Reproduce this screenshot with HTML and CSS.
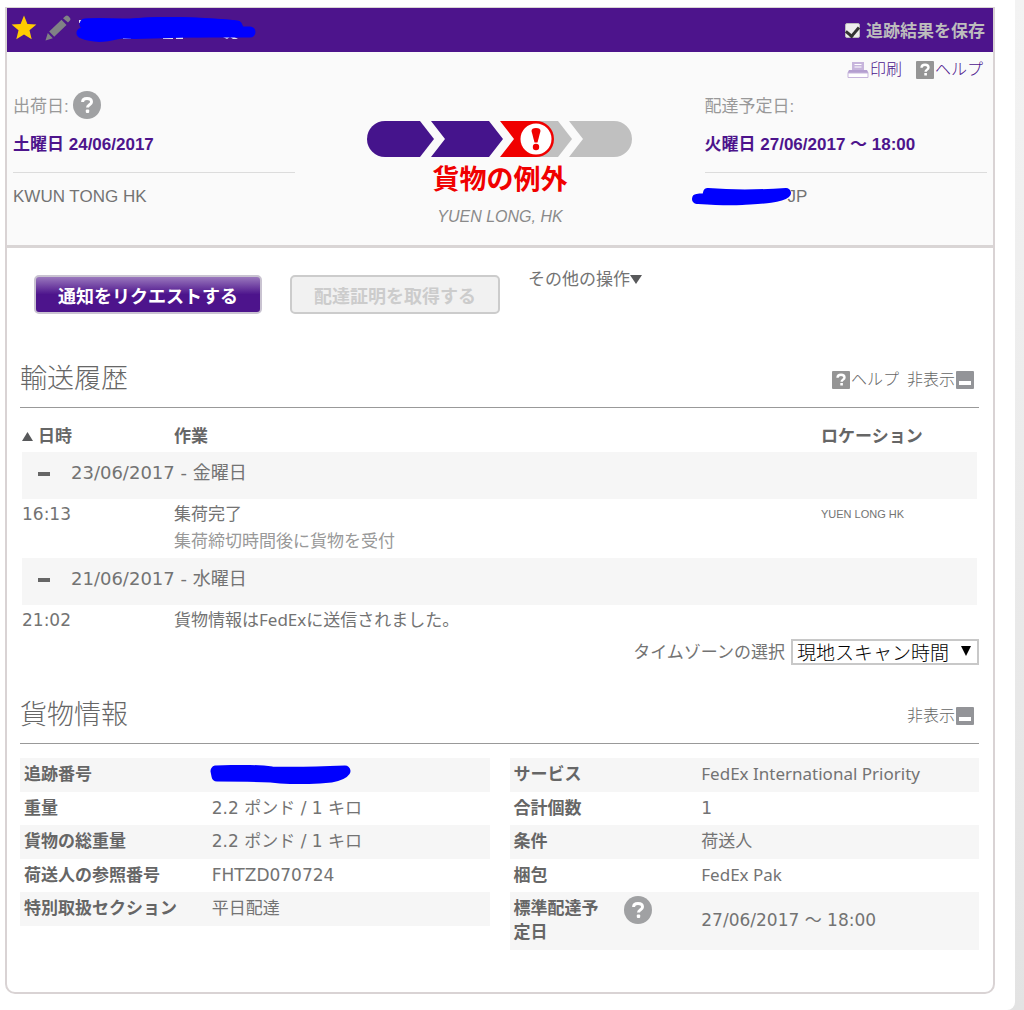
FILE: index.html
```html
<!DOCTYPE html>
<html lang="ja">
<head>
    <meta charset="UTF-8">
    <meta name="viewport" content="width=device-width, initial-scale=1.0">
    <title>貨物追跡</title>
    <link rel="stylesheet" href="styles.css">
</head>
<body>

<svg class="sprite" aria-hidden="true">
    <symbol id="icon-help-round" viewBox="0 0 28 28">
        <circle cx="14" cy="14" r="14" fill="#a0a1a3"/>
        <path d="M9.600 11C9.600 8.400 11.400 7.500 14 7.500c2.600 0 4.500 1.200 4.500 3.400 0 2.900-4 2.600-4 5.600" fill="none" stroke="#fff" stroke-width="3"/>
        <rect x="12.800" y="18.500" width="3.400" height="3.500" rx="1" fill="#fff"/>
    </symbol>
    <symbol id="icon-help" viewBox="0 0 18 18">
        <rect width="18" height="18" rx="1" fill="#959595"/>
        <path d="M5.500 6.700C5.600 4.600 7 3.800 9 3.800s3.500.9 3.500 2.700c0 2.200-2.900 2.100-2.900 4.300" fill="none" stroke="#fff" stroke-width="2.400"/>
        <rect x="8.300" y="12" width="2.600" height="2.500" fill="#fff"/>
    </symbol>
    <symbol id="icon-minus" viewBox="0 0 18 18">
        <rect width="18" height="18" rx="1" fill="#939498"/>
        <rect x="3" y="10" width="12" height="4" fill="#fff"/>
    </symbol>
</svg>

<div class="page">
    <main class="card">
        <header class="topbar">
            <button class="icon-button" aria-label="お気に入り">
                <svg width="26" height="26" viewBox="0 0 26 26"><path d="M13 0.500l3.400 8.400 9 .6-6.900 5.800 2.200 9-7.700-4.800-7.700 4.800 2.200-9L.6 9.500l9-.6z" fill="#ffcc00"/></svg>
            </button>
            <button class="icon-button" aria-label="編集">
                <svg width="26" height="26" viewBox="0 0 26 26" fill="#808285"><path d="M0.500 25.500l2.300-7.500 5 5.200z"/><path d="M4.200 16.500L16.500 4.700l5 5.200L9.200 21.700z"/><path d="M18 3.300l2.500-2.400c1-.8 2-.7 3 .4l1.300 1.500c.9 1 .9 2-.1 3L23 7.500z"/></svg>
            </button>
            <svg class="scribble-name" width="182" height="28" viewBox="0 0 182 28">
                <path d="M4 5h8v3H4zM34 6h5v2h-5zM48 22h8v2h-8zM74 20h5v3h-5zM88 21h10v3H88zM101 21h7v3h-7zM148 22l8-2 7 4-5 0-3-2-3 2z" fill="#e6e0ee"/>
                <path d="M10 9C24 8 36 9 56 9c28-3 60-2 106 2M7 18c14 6 28 3 42-1 26-3 60 0 84 0h42" fill="none" stroke="#0000fe" stroke-width="11" stroke-linecap="round"/>
                <path d="M6 8l40-2L56 4c30-4 80-1 102 1 9 2 11 6 10 10l-34 7-74 2L8 22z" fill="#0000fe"/>
            </svg>
            <label class="save"><input type="checkbox" checked>追跡結果を保存</label>
        </header>

        <section class="summary">
            <nav class="tools">
                <a href="#">
                    <svg width="22" height="18" viewBox="0 0 22 18"><path d="M5 1h12v9H5z" fill="#c7b5dc"/><path d="M7.500 3.500h7M7.500 6h7" stroke="#fff"/><path d="M2 9h18l1.500 3H.5z" fill="#b49fd0"/><path d="M1 12h20v4.500H1z" fill="#fff" stroke="#c7b5dc"/></svg>
                    印刷
                </a>
                <a href="#"><svg width="18" height="18"><use href="#icon-help"/></svg>ヘルプ</a>
            </nav>
            <div class="route">
                <div class="stop">
                    <div class="stop-label"><span>出荷日:</span><svg width="28" height="28"><use href="#icon-help-round"/></svg></div>
                    <div class="stop-date">土曜日 24/06/2017</div>
                    <div class="stop-place">KWUN TONG HK</div>
                </div>
                <div class="status">
                    <svg width="266" height="36" viewBox="0 0 266 36">
                        <path d="M18 0h35l14 18-14 18H18a18 18 0 0 1 0-36z" fill="#45148c"/>
                        <path d="M64 0h58l14 18-14 18H64l14-18z" fill="#45148c"/>
                        <path d="M160 0h31l14 18-14 18h-31z" fill="#c0c0c0"/>
                        <path d="M133 0h36a18 18 0 0 1 0 36h-36l14-18z" fill="#f00000"/>
                        <circle cx="169" cy="18" r="15.500" fill="#fff"/>
                        <path d="M164.500 10q0-3 4.500-3t4.500 3l-3 11.500h-3z" fill="#f00000"/>
                        <circle cx="169" cy="26" r="3.200" fill="#f00000"/>
                        <path d="M202 0h45a18 18 0 0 1 0 36h-45l14-18z" fill="#c0c0c0"/>
                    </svg>
                    <div class="status-text">貨物の例外</div>
                    <div class="status-place">YUEN LONG, HK</div>
                </div>
                <div class="stop">
                    <div class="stop-label"><span>配達予定日:</span></div>
                    <div class="stop-date">火曜日 27/06/2017 ～ 18:00</div>
                    <div class="stop-place">
                        <svg class="scribble-place" width="100" height="20" viewBox="0 0 100 20"><path d="M5 12c10-1 10-1 11-6 24 2 48 2 78 0-8 6-30 6-44 7-16 1-30 0-45-1z" fill="#0000fe" stroke="#0000fe" stroke-width="10" stroke-linejoin="round"/></svg>JP
                    </div>
                </div>
            </div>
        </section>

        <div class="actions">
            <button class="button button-primary">通知をリクエストする</button>
            <button class="button" disabled>配達証明を取得する</button>
            <a class="more" href="#">その他の操作<svg width="12" height="9"><path d="M0 0h12L6 9z" fill="#58595b"/></svg></a>
        </div>

        <section class="section">
            <div class="section-head">
                <h2>輸送履歴</h2>
                <div class="section-links">
                    <a href="#"><svg width="18" height="18"><use href="#icon-help"/></svg>ヘルプ</a>
                    <a href="#">非表示<svg width="18" height="18"><use href="#icon-minus"/></svg></a>
                </div>
            </div>
            <div class="history">
                <table>
                    <thead>
                        <tr>
                            <th class="col-time"><svg width="11" height="9"><path d="M0 9L5.500 0 11 9z" fill="#58595b"/></svg>日時</th>
                            <th>作業</th>
                            <th class="col-place">ロケーション</th>
                        </tr>
                    </thead>
                    <tbody>
                        <tr class="day">
                            <td colspan="3"><button class="toggle" aria-label="閉じる"></button>23/06/2017 - 金曜日</td>
                        </tr>
                        <tr>
                            <td>16:13</td>
                            <td>集荷完了<div class="note">集荷締切時間後に貨物を受付</div></td>
                            <td class="place">YUEN LONG HK</td>
                        </tr>
                        <tr class="day">
                            <td colspan="3"><button class="toggle" aria-label="閉じる"></button>21/06/2017 - 水曜日</td>
                        </tr>
                        <tr>
                            <td>21:02</td>
                            <td class="text">貨物情報はFedExに送信されました。</td>
                            <td></td>
                        </tr>
                    </tbody>
                </table>
            </div>
            <div class="timezone">
                <label for="timezone">タイムゾーンの選択</label>
                <select id="timezone">
                    <option>現地スキャン時間</option>
                </select>
            </div>
        </section>

        <section class="section">
            <div class="section-head">
                <h2>貨物情報</h2>
                <div class="section-links">
                    <a href="#">非表示<svg width="18" height="18"><use href="#icon-minus"/></svg></a>
                </div>
            </div>
            <div class="details">
                <table>
                    <tr>
                        <th>追跡番号</th>
                        <td><svg class="scribble-number" width="142" height="19" viewBox="0 0 142 19"><path d="M6 6c22-1 40-1 56 1 24 1 50 0 73-1-2 3-8 5-14 6-20 2-44 2-60 0-20-1-40-1-54-1z" fill="#0000fe" stroke="#0000fe" stroke-width="11" stroke-linejoin="round"/></svg></td>
                    </tr>
                    <tr><th>重量</th><td>2.2 ポンド / 1 キロ</td></tr>
                    <tr><th>貨物の総重量</th><td>2.2 ポンド / 1 キロ</td></tr>
                    <tr><th>荷送人の参照番号</th><td>FHTZD070724</td></tr>
                    <tr><th>特別取扱セクション</th><td>平日配達</td></tr>
                </table>
                <table>
                    <tr><th>サービス</th><td class="text">FedEx International Priority</td></tr>
                    <tr><th>合計個数</th><td>1</td></tr>
                    <tr><th>条件</th><td>荷送人</td></tr>
                    <tr><th>梱包</th><td class="text">FedEx Pak</td></tr>
                    <tr>
                        <th><div class="with-help"><span>標準配達予定日</span><svg width="28" height="28"><use href="#icon-help-round"/></svg></div></th>
                        <td>27/06/2017 ～ 18:00</td>
                    </tr>
                </table>
            </div>
        </section>
    </main>
</div>

</body>
</html>
```

FILE: styles.css
```css
* {
    box-sizing: border-box;
}
body {
    margin: 0;
    padding-right: 9px;
    background: linear-gradient(#f3f3f3, #e3e3e3);
    color: #737373;
    font-family: "DejaVu Sans", "Noto Sans CJK JP", sans-serif;
    font-size: 17px;
    line-height: 24px;
}
a {
    color: inherit;
    text-decoration: none;
}
button {
    font-family: inherit;
    cursor: pointer;
}
svg {
    flex: none;
}
.sprite {
    display: none;
}
.page {
    min-height: 100vh;
    padding: 7px 20px 16px 5px;
    background: #fff;
    border-radius: 0 0 8px 0;
}
.card {
    border: 2px solid #d9d3d4;
    border-top-width: 1px;
    border-radius: 0 0 10px 10px;
    padding-bottom: 42px;
}

/* top bar */
.topbar {
    display: flex;
    align-items: center;
    height: 44px;
    padding: 0 8px 4px 4px;
    background: #4d148c;
}
.icon-button {
    display: flex;
    margin-right: 8px;
    padding: 0;
    border: 0;
    background: none;
}
.scribble-name {
    margin: 2px 0 0 -4px;
}
.save {
    display: flex;
    align-items: center;
    gap: 6px;
    margin: 8px 0 0 auto;
    color: #bdbdbd;
    font-family: "Liberation Sans", "Noto Sans CJK JP", sans-serif;
    font-weight: bold;
}
.save input {
    appearance: none;
    width: 15px;
    height: 15px;
    margin: 0 0 4px;
    border: 1px solid #bbb;
    border-radius: 2px;
    background: #eee;
}
.save input:checked::before {
    content: "";
    display: block;
    width: 6px;
    height: 10px;
    margin: 0 auto;
    border: solid #333;
    border-width: 0 3px 3px 0;
    transform: rotate(40deg);
}

/* summary */
.summary {
    padding: 0 6px;
    background: #fafafa;
    border-bottom: 3px solid #d9d5d5;
    font-family: "Liberation Sans", "Noto Sans CJK JP", sans-serif;
}
.tools {
    display: flex;
    justify-content: flex-end;
    align-items: center;
    gap: 14px;
    height: 36px;
    padding-right: 4px;
    color: #4d148c;
    font-size: 16px;
    font-weight: 300;
}
.tools a,
.section-links a {
    display: flex;
    align-items: center;
    gap: 1px;
}
.route {
    display: grid;
    grid-template-columns: 29% 1fr 29%;
}
.stop-label {
    display: flex;
    gap: 4px;
    height: 36px;
    padding-top: 3px;
    color: #999;
}
.stop-label span {
    padding-top: 4px;
}
.stop-date {
    padding: 9px 0 15px;
    border-bottom: 1px solid #dcdcdc;
    color: #4d148c;
    font-weight: bold;
}
.stop-place {
    display: flex;
    align-items: center;
    height: 47px;
}
.scribble-place {
    margin: 0 -4px 0 -13px;
}
.status {
    padding: 33px 0 14px;
    text-align: center;
}
.status svg {
    display: block;
    margin: 0 auto;
}
.status-text {
    color: #f00000;
    font-size: 27px;
    font-weight: bold;
    line-height: 46px;
}
.status-place {
    color: #8a8a8a;
    font-size: 16px;
    font-style: italic;
    line-height: 28px;
}

/* actions */
.actions {
    display: flex;
    align-items: flex-start;
    gap: 28px;
    padding: 27px 27px 38px;
}
.button {
    height: 39px;
    padding: 0 22px;
    border: 2px solid #ccc;
    border-radius: 5px;
    background: #f1f1f1;
    color: #ccc;
    font-size: 18px;
    font-weight: bold;
}
.button-primary {
    border-color: #c9c3d1;
    background: linear-gradient(#9a78bd, #4d148c 50%);
    color: #fff;
}
.more {
    display: flex;
    align-items: center;
    margin-top: -8px;
}

/* sections */
.section {
    margin: 0 14px 0 13px;
}
.section-head {
    display: flex;
    justify-content: space-between;
    align-items: center;
    height: 56px;
    border-bottom: 1px solid #999;
}
h2 {
    margin: 0 0 2px;
    color: #666;
    font-size: 27px;
    font-weight: 300;
    line-height: 40px;
}
.section-links {
    display: flex;
    gap: 8px;
    padding-right: 5px;
    color: #666;
    font-size: 16px;
    font-weight: 300;
}
table {
    width: 100%;
    border-collapse: collapse;
    table-layout: fixed;
}
th,
td {
    padding: 0;
    text-align: left;
    vertical-align: top;
}
th {
    color: #666;
}
.text {
    font-family: "Noto Sans", "Noto Sans CJK JP", sans-serif;
}
.history {
    padding: 13px 2px 0;
}
.history th {
    padding: 3px 0 4px;
}
.history th svg {
    margin: 0 5px 1px 0;
}
.history td {
    padding: 3px 0 2px;
}
.col-time {
    width: 152px;
}
.col-place {
    width: 156px;
}
.history .day td {
    height: 47px;
    padding: 9px 0 0 16px;
    background: #f6f6f6;
    font-size: 18px;
}
.toggle {
    width: 12px;
    height: 4px;
    margin-right: 21px;
    padding: 0;
    border: 0;
    background: #666;
    vertical-align: middle;
}
.note {
    padding: 3px 0;
    color: #999;
}
.history .place {
    font-family: "Liberation Sans", sans-serif;
    font-size: 11px;
}
.timezone {
    display: flex;
    justify-content: flex-end;
    align-items: center;
    gap: 6px;
    margin: 5px 0 23px;
}
.timezone select {
    appearance: none;
    width: 188px;
    height: 26px;
    padding: 0 4px;
    border: 2px solid #c8c8c8;
    border-radius: 0;
    background: #fff url("data:image/svg+xml,%3Csvg xmlns='http://www.w3.org/2000/svg' width='10' height='10'%3E%3Cpath d='M0 0h10L5 10z'/%3E%3C/svg%3E") no-repeat right 6px top 5px;
    color: #000;
    font-family: "Noto Sans CJK JP", sans-serif;
    font-size: 19px;
    font-weight: 300;
    line-height: 22px;
}
.details {
    display: grid;
    grid-template-columns: 1fr 1fr;
    gap: 20px;
    align-items: start;
    margin-top: 14px;
}
.details tr {
    height: 33px;
}
.details tr:nth-child(odd) {
    height: 34px;
    background: #f6f6f6;
}
.details th {
    width: 40%;
    padding: 4px 0 0 4px;
}
.details td {
    padding: 0 4px 2px;
    vertical-align: middle;
}
.with-help {
    display: flex;
    gap: 24px;
    padding-bottom: 6px;
}
.with-help span {
    width: 86px;
}
.scribble-number {
    display: block;
    margin-left: -2px;
}
```
